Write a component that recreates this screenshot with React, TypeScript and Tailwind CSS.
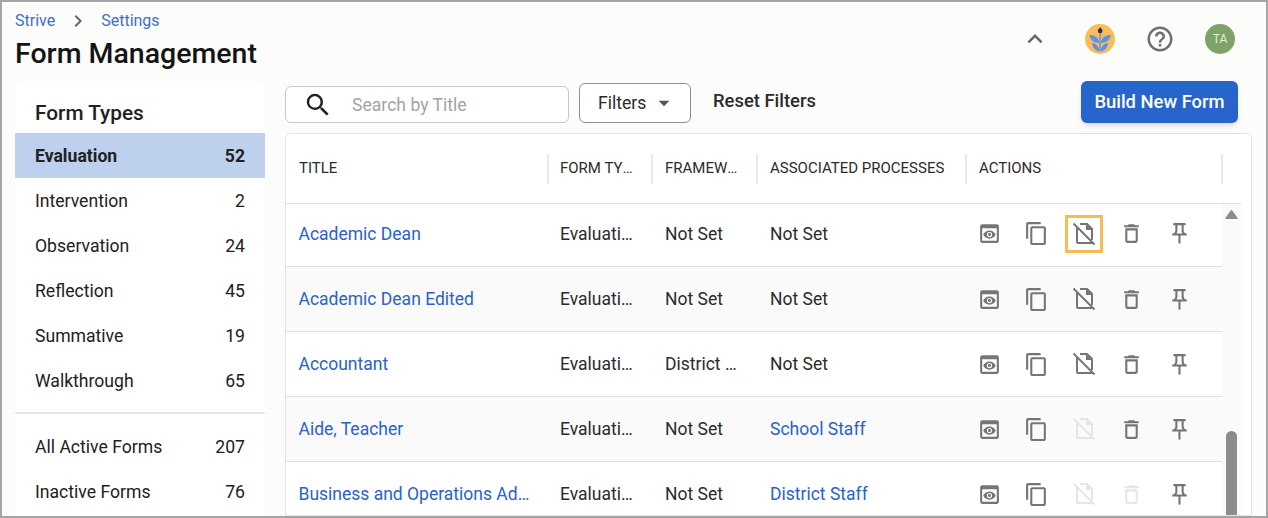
import React from "react";
import { MdPreview, MdOutlineContentCopy, MdOutlineDelete, MdOutlinePushPin, MdHelpOutline, MdKeyboardArrowUp, MdChevronRight, MdSearch, MdArrowDropDown } from "react-icons/md";

const font = { fontFamily: "Roboto, sans-serif" };

const types: [string, number][] = [
  ["Intervention", 2],
  ["Observation", 24],
  ["Reflection", 45],
  ["Summative", 19],
  ["Walkthrough", 65],
];

type RowData = { title: string; fw: string; proc: string; link: boolean; docOff: boolean; trashOff: boolean; focus?: boolean };
const rows: RowData[] = [
  { title: "Academic Dean", fw: "Not Set", proc: "Not Set", link: false, docOff: false, trashOff: false, focus: true },
  { title: "Academic Dean Edited", fw: "Not Set", proc: "Not Set", link: false, docOff: false, trashOff: false },
  { title: "Accountant", fw: "District Default", proc: "Not Set", link: false, docOff: false, trashOff: false },
  { title: "Aide, Teacher", fw: "Not Set", proc: "School Staff", link: true, docOff: true, trashOff: false },
  { title: "Business and Operations Administrator", fw: "Not Set", proc: "District Staff", link: true, docOff: true, trashOff: true },
];

function DocOff({ disabled }: { disabled: boolean }) {
  const c = disabled ? "#e6e6e6" : "#757575";
  return (
    <svg width="24" height="24" viewBox="0 0 24 24" fill="none" stroke={c} strokeWidth="2">
      <path d="M5 6v14a1 1 0 0 0 1 1h14" />
      <path d="M8 2h7l5 5v11" />
      <path d="M14 2v6h6" fill={c} stroke="none" />
      <path d="M1.5 1.5l21 21" />
    </svg>
  );
}

function Logo() {
  return (
    <svg width="30" height="30" viewBox="0 0 30 30">
      <circle cx="15" cy="15" r="15" fill="#f6bd59" />
      <path d="M15.2 3.2c1.4 1.4 2.3 2.5 2.3 3.7a2.3 2.3 0 0 1-4.6 0c0-1.2.9-2.3 2.3-3.7z" fill="#2f2f5c" />
      <path d="M14.4 9h1.4v18h-1.4z" fill="#5a92e8" />
      <path d="M14.5 19C9 19 5 15.5 4.5 11c5.5 0 9.5 3 10 8zM15.7 19c5.5 0 9.5-3.5 10-8-5.5 0-9.5 3-10 8z" fill="#5a92e8" />
      <path d="M14.5 27.5C10.5 27 7.5 23.5 7 19c4 0 7 3.5 7.5 8.5zM15.7 27.5c4-.5 7-4 7.500-8.500-4 0-7 3.500-7.500 8.500z" fill="#5a92e8" />
    </svg>
  );
}

function SideRow({ label, n, active, top }: { label: string; n: number; active?: boolean; top?: boolean }) {
  return (
    <div className={`flex h-[45px] items-center justify-between px-5 text-[17.6px] text-[#212121] ${top ? "pt-[2px]" : ""} ${active ? "bg-[#bdd0ee] font-bold" : ""}`}>
      <span>{label}</span>
      <span>{n}</span>
    </div>
  );
}

function Th({ w, children }: { w: string; children?: React.ReactNode }) {
  return (
    <div className={`${w} flex h-[30px] shrink-0 items-center border-r-2 border-[#e8e8e8] pr-[12px]`}>
      <span className="truncate">{children}</span>
    </div>
  );
}

function Row({ r, i }: { r: RowData; i: number }) {
  const bg = i % 2 === 1 ? "bg-[#fafafa]" : "bg-white";
  const h = i === 0 ? "h-[63px] pb-[3px]" : "h-[65px]";
  return (
    <div className={`flex ${h} shrink-0 items-center border-b border-[#e0e0e0] text-[17.5px] text-[#2b2b2b] ${bg}`}>
      <div className={`w-[262px] truncate pl-[12.500px] pr-[14px] text-[#2a62c9] ${i === 0 ? "pt-[2px]" : ""}`}>{r.title}</div>
      <div className={`w-[104px] truncate pl-[12px] pr-[16px] ${i === 0 ? "pt-[2px]" : ""}`}>Evaluation</div>
      <div className={`w-[105px] truncate pl-[13px] pr-[18px] ${i === 0 ? "pt-[2px]" : ""}`}>{r.fw}</div>
      <div className={`w-[208px] truncate pl-[13px] pr-3 ${r.link ? "text-[#2a62c9]" : ""} ${i === 0 ? "pt-[2px]" : ""}`}>{r.proc}</div>
      <div className="flex w-[239px] items-center text-[#757575]">
        <div className="flex w-[47.500px] justify-center pl-[1px]"><MdPreview size={25} /></div>
        <div className="flex w-[47.500px] justify-center"><MdOutlineContentCopy size={25} /></div>
        <div className="flex w-[47.500px] justify-center">
          <div className={`flex h-[38px] w-[38px] items-center justify-center border-[3px] ${r.focus ? "border-[#f3bd52]" : "border-transparent"}`}>
            <DocOff disabled={r.docOff} />
          </div>
        </div>
        <div className="flex w-[47.500px] justify-center"><MdOutlineDelete size={25} className={r.trashOff ? "text-[#e6e6e6]" : ""} /></div>
        <div className="flex w-[47.500px] justify-center pl-[1px]"><MdOutlinePushPin size={25} /></div>
      </div>
    </div>
  );
}

export default function App() {
  return (
    <div style={font} className="box-border flex h-[518px] w-[1268px] flex-col overflow-hidden border-2 border-[#a5a5a5] bg-[#fcfcfa]">
      <header className="flex h-[79px] shrink-0 justify-between pl-[13px] pr-[31px]">
        <div>
          <div className="flex h-[36px] items-center pt-[1px] text-[16px] text-[#3f6fc8]">
            <span>Strive</span>
            <MdChevronRight size={24} className="mx-[11px] text-[#666]" />
            <span>Settings</span>
          </div>
          <h1 className="pt-[1px] text-[28.500px] font-medium leading-[30px] text-[#141414]">Form Management</h1>
        </div>
        <div className="flex items-start gap-[30px] pt-[22px]">
          <MdKeyboardArrowUp size={30} className="mr-[5px] text-[#666]" />
          <Logo />
          <MdHelpOutline size={30} className="text-[#6e6e6e]" />
          <div className="flex h-[30px] w-[30px] items-center justify-center rounded-full bg-[#7ea268] text-[12px] text-[#e4ecd9]">TA</div>
        </div>
      </header>

      <div className="flex min-h-0 flex-1 gap-5 pl-[13px]">
        <aside className="w-[250px] shrink-0 rounded-t-xl bg-white">
          <div className="flex h-[52px] items-end pb-[8px] pl-5 text-[20.800px] font-medium leading-6 text-[#212121]">Form Types</div>
          <SideRow label="Evaluation" n={52} active top />
          {types.map(([l, n]) => <SideRow key={l} label={l} n={n} top />)}
          <div className="mt-[9px] mb-[11px] border-t-2 border-[#e6e6e6]" />
          <SideRow label="All Active Forms" n={207} />
          <SideRow label="Inactive Forms" n={76} />
        </aside>

        <main className="flex w-[967px] shrink-0 flex-col">
          <div className="flex h-[42px] shrink-0 items-end">
            <div className="flex h-[37px] w-[284px] items-center rounded-md border border-[#c8c8c8] bg-white pl-[17px]">
              <MdSearch size={30} className="text-[#222]" />
              <span className="ml-[19px] pt-[2px] text-[17.6px] text-[#a3a3a3]">Search by Title</span>
            </div>
            <div className="ml-[10px] flex h-[40px] w-[112px] items-center rounded-md border border-[#8f8f8f] bg-white pl-[18px] text-[17.6px] text-[#2b2b2b]">
              <span className="pt-[1px]">Filters</span>
              <MdArrowDropDown size={26} className="ml-[5px] text-[#555]" />
            </div>
            <div className="ml-[22px] h-[42px] text-[18.4px] font-medium leading-[40px] text-[#2b2b2b]">Reset Filters</div>
            <div className="ml-auto mr-[14px] flex h-[42px] w-[157px] items-center justify-center rounded-md bg-[#2764cc] text-[18.4px] font-medium text-white shadow-md">Build New Form</div>
          </div>

          <div className="mt-[10px] flex min-h-0 flex-1 flex-col overflow-hidden rounded-t-md border border-[#e4e4e4] bg-white pr-[10px]">
            <div className="flex h-[70px] shrink-0 items-center border-b border-[#e0e0e0] text-[15px] uppercase text-[#2b2b2b]">
              <Th w="w-[263px] pl-[13px]">Title</Th>
              <Th w="w-[104px] pl-[11px]">Form Type</Th>
              <Th w="w-[105px] pl-[12px]">Framework</Th>
              <Th w="w-[209px] pl-[12px]">Associated Processes</Th>
              <Th w="w-[256px] pl-[12px]">Actions</Th>
            </div>
            <div className="flex min-h-0 flex-1">
              <div className="flex w-[936px] flex-col">
                {rows.map((r, i) => <Row key={r.title} r={r} i={i} />)}
              </div>
              <div className="relative w-[19px] shrink-0 bg-[#fafafa]">
                <svg width="13" height="9" viewBox="0 0 13 9" className="absolute left-[3px] top-[6px]">
                  <path d="M5.700 0.500a1 1 0 0 1 1.600 0l5.200 7.200a.8.8 0 0 1-.7 1.300H1.200a.8.8 0 0 1-.7-1.300z" fill="#8c8c8c" />
                </svg>
                <div className="absolute left-[4px] top-[227px] h-[120px] w-[11px] rounded-full bg-[#8c8c8c]" />
              </div>
            </div>
          </div>
        </main>
      </div>
    </div>
  );
}
